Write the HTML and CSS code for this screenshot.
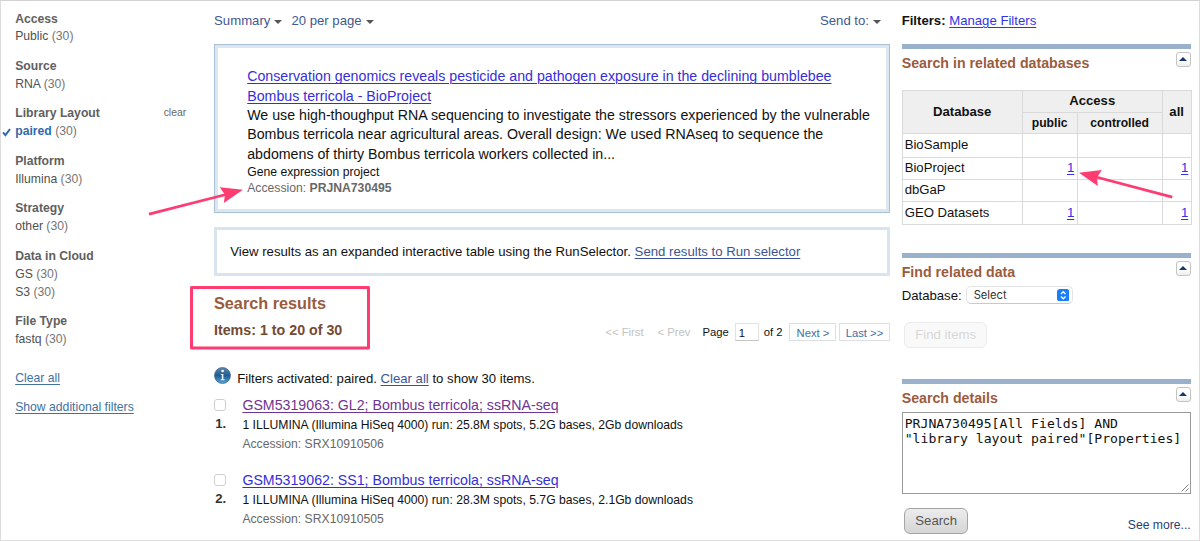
FILE: index.html
```html
<!DOCTYPE html>
<html lang="en">
<head>
<meta charset="utf-8">
<title>SRA search results</title>
<link rel="stylesheet" href="styles.css">
</head>
<body>
<div class="page">
  <aside class="facets">
    <section class="facet"><h3>Access</h3><p>Public <i>(30)</i></p></section>
    <section class="facet"><h3>Source</h3><p>RNA <i>(30)</i></p></section>
    <section class="facet">
      <h3>Library Layout <span class="clear">clear</span></h3>
      <p class="selected"><svg class="check" viewBox="0 0 9 9"><path d="M1 4.4 L3.4 7.2 L8 1.2" fill="none" stroke="#2f6bab" stroke-width="2"/></svg><b>paired</b> <i>(30)</i></p>
    </section>
    <section class="facet"><h3>Platform</h3><p>Illumina <i>(30)</i></p></section>
    <section class="facet"><h3>Strategy</h3><p>other <i>(30)</i></p></section>
    <section class="facet"><h3>Data in Cloud</h3><p>GS <i>(30)</i></p><p>S3 <i>(30)</i></p></section>
    <section class="facet"><h3>File Type</h3><p>fastq <i>(30)</i></p></section>
    <a class="facet-link first">Clear all</a>
    <a class="facet-link">Show additional filters</a>
  </aside>

  <main class="content">
    <div class="toolbar">
      <span class="menu">Summary<span class="caret"></span></span>
      <span class="menu">20 per page<span class="caret"></span></span>
      <span class="menu send">Send to:<span class="caret"></span></span>
    </div>
    <div class="project"><div class="project-inner">
      <p class="lead"><a class="blue">Conservation genomics reveals pesticide and pathogen exposure in the declining bumblebee<br>Bombus terricola - BioProject</a><br>We use high-thoughput RNA sequencing to investigate the stressors experienced by the vulnerable<br>Bombus terricola near agricultural areas. Overall design: We used RNAseq to sequence the<br>abdomens of thirty Bombus terricola workers collected in...</p>
      <p class="note">Gene expression project</p>
      <p class="note gray">Accession: <b>PRJNA730495</b></p>
    </div></div>
    <div class="selector">View results as an expanded interactive table using the RunSelector. <a>Send results to Run selector</a></div>
    <h2>Search results</h2>
    <div class="count-row">
      <h3>Items: 1 to 20 of 30</h3>
      <div class="pager">
        <span class="off">&lt;&lt; First</span><span class="off prev">&lt; Prev</span>
        <span class="page-label">Page</span><span class="page-input">1</span><span class="of">of 2</span>
        <span class="page-btn next">Next &gt;</span><span class="page-btn last">Last &gt;&gt;</span>
      </div>
    </div>
    <div class="activated">
      <svg class="info" viewBox="0 0 17 17"><defs><linearGradient id="ig" x1="0" y1="0" x2="0" y2="1"><stop offset="0" stop-color="#6187a8"/><stop offset=".5" stop-color="#1f5c91"/><stop offset="1" stop-color="#58a5da"/></linearGradient></defs><circle cx="8.5" cy="8.5" r="8" fill="url(#ig)" stroke="#3c6286" stroke-width=".7"/><circle cx="8.6" cy="4" r="1.3" fill="#fff"/><path d="M6.8 6.9H9.4V12.2H10.6V13.2H6.7V12.2H7.8V7.9H6.8Z" fill="#e3eef7"/></svg>
      <span>Filters activated: paired. <a>Clear all</a> to show 30 items.</span>
    </div>
    <article class="result">
      <div class="pick"><span class="box"></span><b>1.</b></div>
      <div><p class="title visited">GSM5319063: GL2; Bombus terricola; ssRNA-seq</p><p class="run">1 ILLUMINA (Illumina HiSeq 4000) run: 25.8M spots, 5.2G bases, 2Gb downloads</p><p class="acc">Accession: SRX10910506</p></div>
    </article>
    <article class="result">
      <div class="pick"><span class="box"></span><b>2.</b></div>
      <div><p class="title">GSM5319062: SS1; Bombus terricola; ssRNA-seq</p><p class="run">1 ILLUMINA (Illumina HiSeq 4000) run: 28.3M spots, 5.7G bases, 2.1Gb downloads</p><p class="acc">Accession: SRX10910505</p></div>
    </article>
  </main>

  <aside class="side">
    <div class="filters"><b>Filters:</b> <a>Manage Filters</a></div>
    <section class="portlet related">
      <header><h4>Search in related databases</h4><span class="toggle"></span></header>
      <table>
        <colgroup><col class="c-db"><col class="c-pub"><col class="c-con"><col class="c-all"></colgroup>
        <tr class="h1"><th rowspan="2">Database</th><th colspan="2">Access</th><th rowspan="2">all</th></tr>
        <tr class="h2"><th>public</th><th>controlled</th></tr>
        <tr class="r1"><td>BioSample</td><td></td><td></td><td></td></tr>
        <tr class="r2"><td>BioProject</td><td><a>1</a></td><td></td><td><a>1</a></td></tr>
        <tr class="r3"><td>dbGaP</td><td></td><td></td><td></td></tr>
        <tr class="r4"><td>GEO Datasets</td><td><a>1</a></td><td></td><td><a>1</a></td></tr>
      </table>
    </section>
    <section class="portlet find">
      <header><h4>Find related data</h4><span class="toggle"></span></header>
      <div class="db-row"><span>Database:</span>
        <span class="select">Select<svg viewBox="0 0 12 12"><rect width="12" height="12" rx="3" fill="#1a7dfa"/><path d="M3.8 4.8L6 2.6L8.2 4.8M3.8 7.2L6 9.4L8.2 7.2" fill="none" stroke="#fff" stroke-width="1.3"/></svg></span>
      </div>
      <span class="btn disabled">Find items</span>
    </section>
    <section class="portlet details">
      <header><h4>Search details</h4><span class="toggle"></span></header>
      <div class="query">PRJNA730495[All Fields] AND
"library layout paired"[Properties]<svg class="grip" viewBox="0 0 8 8"><path d="M0.5 7.5L7.5 0.5M4.5 7.5L7.5 4.5" stroke="#777" stroke-width=".9"/></svg></div>
      <div class="actions"><span class="btn">Search</span><a class="more">See more...</a></div>
    </section>
  </aside>

  <svg class="marks" viewBox="0 0 1200 541">
    <rect x="191.5" y="287.5" width="177" height="60.5" fill="none" stroke="#fd3c72" stroke-width="3" stroke-linejoin="round"/>
    <g stroke="#fd3c72" stroke-width="2.8"><path d="M149 214.2L226 194.5"/><path d="M1172.3 197.2L1096 177"/></g>
    <g fill="#fd3c72"><path d="M243 189.8L219.7 187.3L225 194.8L223.8 203Z"/><path d="M1079 172.7L1101.8 170L1097 177.4L1097.8 186Z"/></g>
  </svg>
</div>
</body>
</html>
```
FILE: styles.css
```css
* { box-sizing: border-box; }
body { margin: 0; }
h2, h3, h4, p { margin: 0; }
p, .toolbar, .title { white-space: nowrap; }
a { text-decoration: underline; text-underline-offset: 1.5px; text-decoration-thickness: 1px; }

.page {
  position: relative;
  display: grid;
  grid-template-columns: 212.7px 676.3px 1fr;
  width: 1200px;
  height: 541px;
  overflow: hidden;
  border: 1px solid #dcdcdc;
  border-top-color: #d2d2d2;
  background: #fff;
  font-family: "Liberation Sans", Arial, sans-serif;
  font-size: 13.17px;
  color: #111;
}

/* Facets */
.facets { padding: 8.5px 0 0 14.2px; font-size: 12.2px; color: #505050; }
.facet { margin-bottom: 10.9px; }
.facet h3 { display: flex; font-size: 12.2px; line-height: 18.3px; margin-bottom: .6px; color: #606060; }
.facet p { line-height: 17.7px; }
.facet i { font-style: normal; color: #757575; }
.clear { margin-left: auto; margin-right: 27.5px; font-size: 10.4px; font-weight: normal; color: #666; }
.facet b { color: #2f6bab; }
.selected { margin-left: -13px; }
.check { width: 9px; height: 9px; margin-right: 4px; vertical-align: -1.5px; }
.facet-link { display: block; width: max-content; line-height: 18px; margin-bottom: 11.2px; color: #41719f; }
.facet-link.first { margin-top: 20.6px; }

/* Main column */
.toolbar { display: flex; gap: 9px; height: 43px; padding: 11px 0 0 .4px; line-height: 18px; color: #3f5890; }
.send { margin-left: auto; margin-right: 9px; }
.caret { display: inline-block; margin-left: 4px; vertical-align: 1px; border: 4px solid transparent; border-top: 4.5px solid #555; border-bottom: 0; }
.project { height: 169px; border: 1px solid #a9c1d6; }
.project-inner { height: 167px; border: 3px solid #dce6ef; padding: 19.4px 0 0 29.5px; }
.lead { font-size: 14.21px; line-height: 19.35px; }
.blue { color: #352fd6; }
.note { font-size: 12.2px; line-height: 16px; }
.gray { color: #686868; }
.selector { height: 49px; margin-top: 14px; border: 3px solid #dae4ef; padding: 12.7px 0 0 13.5px; font-size: 13.2px; line-height: 18px; white-space: nowrap; }
.selector a, .activated a { color: #3c5495; }
.content h2 { margin-top: 15.6px; padding-left: .3px; font-size: 16.25px; line-height: 22px; color: #9a5c3c; }
.count-row { display: flex; align-items: center; justify-content: space-between; height: 20px; margin-top: 8px; }
.count-row h3 { margin-top: -3.4px; padding-left: .3px; font-size: 14.25px; line-height: 20px; color: #754a33; }
.pager { display: flex; align-items: center; font-size: 11.25px; line-height: 18px; white-space: nowrap; }
.off, .page-label, .of { padding-top: 1px; }
.off { color: #c2c2c2; }
.prev { margin-left: 14px; }
.page-label { margin-left: 12px; }
.page-input { width: 24px; height: 18px; margin: 0 5px 0 6px; padding-left: 3px; border: 1px solid #e2e2e2; border-bottom-color: #c5c5c5; line-height: 18px; }
.page-btn { height: 18px; border: 1px solid #dcdfe3; line-height: 18px; text-align: center; color: #3d6fa6; }
.next { width: 47px; margin-left: 7px; }
.last { width: 51px; margin-left: 2.5px; }
.activated { display: flex; align-items: center; height: 20px; margin-top: 24.4px; }
.activated span { margin-top: 5px; }
.info { width: 17px; height: 17px; margin-right: 6.5px; }
.result { display: grid; grid-template-columns: 28.7px 1fr; height: 75px; margin-top: 10px; }
.result + .result { margin-top: 0; }
.pick { display: flex; flex-direction: column; padding-top: 3px; }
.pick b { padding-left: 1.5px; margin-top: 4px; line-height: 18px; color: #333; }
.box { width: 12.5px; height: 12.5px; border: 1px solid #cfcfcf; border-radius: 3px; background: #fff; }
.title { font-size: 14.2px; line-height: 19px; color: #352fd6; text-decoration: underline; text-underline-offset: 1.5px; text-decoration-thickness: 1px; }
.visited { color: #703591; }
.run { font-size: 12.18px; line-height: 20px; }
.acc { font-size: 12.18px; line-height: 18px; color: #686868; margin-top: -.4px; }

/* Side column */
.side { width: 301.5px; padding: 0 0 0 11.7px; }
.side > * { width: 289px; }
.filters { height: 42.7px; padding-top: 11px; line-height: 18px; }
.side a { color: #3232e6; }
.portlet { border-top: 5px solid #9ab1cb; }
.portlet header { display: flex; justify-content: space-between; }
.portlet h4 { font-size: 14.2px; line-height: 20px; padding-top: 4.5px; color: #9b5c3d; }
.toggle { display: flex; align-items: center; justify-content: center; width: 15px; height: 15px; margin-top: 3.3px; border: 1px solid #c4c4c4; border-radius: 3px; background: linear-gradient(#fff 50%, #eee); }
.toggle::before { content: ""; border: 4px solid transparent; border-bottom: 4px solid #17386f; border-top: 0; margin-top: -1px; }
.related { height: 209.3px; }
.related header { height: 41.3px; }
table { width: 290px; table-layout: fixed; border-collapse: collapse; }
.c-db { width: 120px; } .c-pub { width: 55px; } .c-con { width: 85px; } .c-all { width: 29px; }
th, td { padding: 0; border: 1px solid #dadada; font-size: 13.15px; line-height: 18px; }
th { background: #efefef; }
.h2 th { font-size: 12.17px; }
td { padding: 0 2.4px 0 2px; text-align: right; }
td:first-child { text-align: left; }
.h1 { height: 22px; } .h2 { height: 21px; } .r1 { height: 24px; } .r2 { height: 22px; } .r3 { height: 22px; } .r4 { height: 23px; }
.find { height: 126px; }
.db-row { display: flex; align-items: center; gap: 4.5px; height: 19px; margin-top: 3.2px; }
.select { display: flex; align-items: center; justify-content: space-between; width: 107px; height: 18px; padding: 0 3px 0 6.5px; border: 1px solid #e4e4e4; border-bottom-color: #c8c8c8; border-radius: 5px; font: 11.2px Inter, sans-serif; color: #333; }
.select svg { width: 12.5px; height: 12.5px; }
.btn { display: block; width: 64px; height: 26px; border: 1px solid #a5a5a5; border-radius: 6px; background: linear-gradient(#ececec, #d5d5d5); line-height: 24px; text-align: center; color: #555; }
.btn.disabled { width: 83px; margin: 17.5px 0 0 2.5px; border-color: #ebebeb; background: #f9f9f9; color: #d8d8d8; }
.details header { height: 28px; }
.query { position: relative; height: 82px; border: 1px solid #9a9a9a; padding: 3px 2px; font: 13.13px/15.2px "DejaVu Sans Mono", monospace; white-space: pre; }
.grip { position: absolute; right: 1px; bottom: 1px; width: 8px; height: 8px; }
.actions { display: flex; justify-content: space-between; padding: 13.8px 0 0 2.5px; }
.side .more { margin-top: 8px; font-size: 12.17px; line-height: 18px; color: #1f3f78; text-decoration: none; }

/* Callout arrows and frame over the page */
.marks { position: absolute; left: -1px; top: -1px; width: 1200px; height: 541px; pointer-events: none; }
```
